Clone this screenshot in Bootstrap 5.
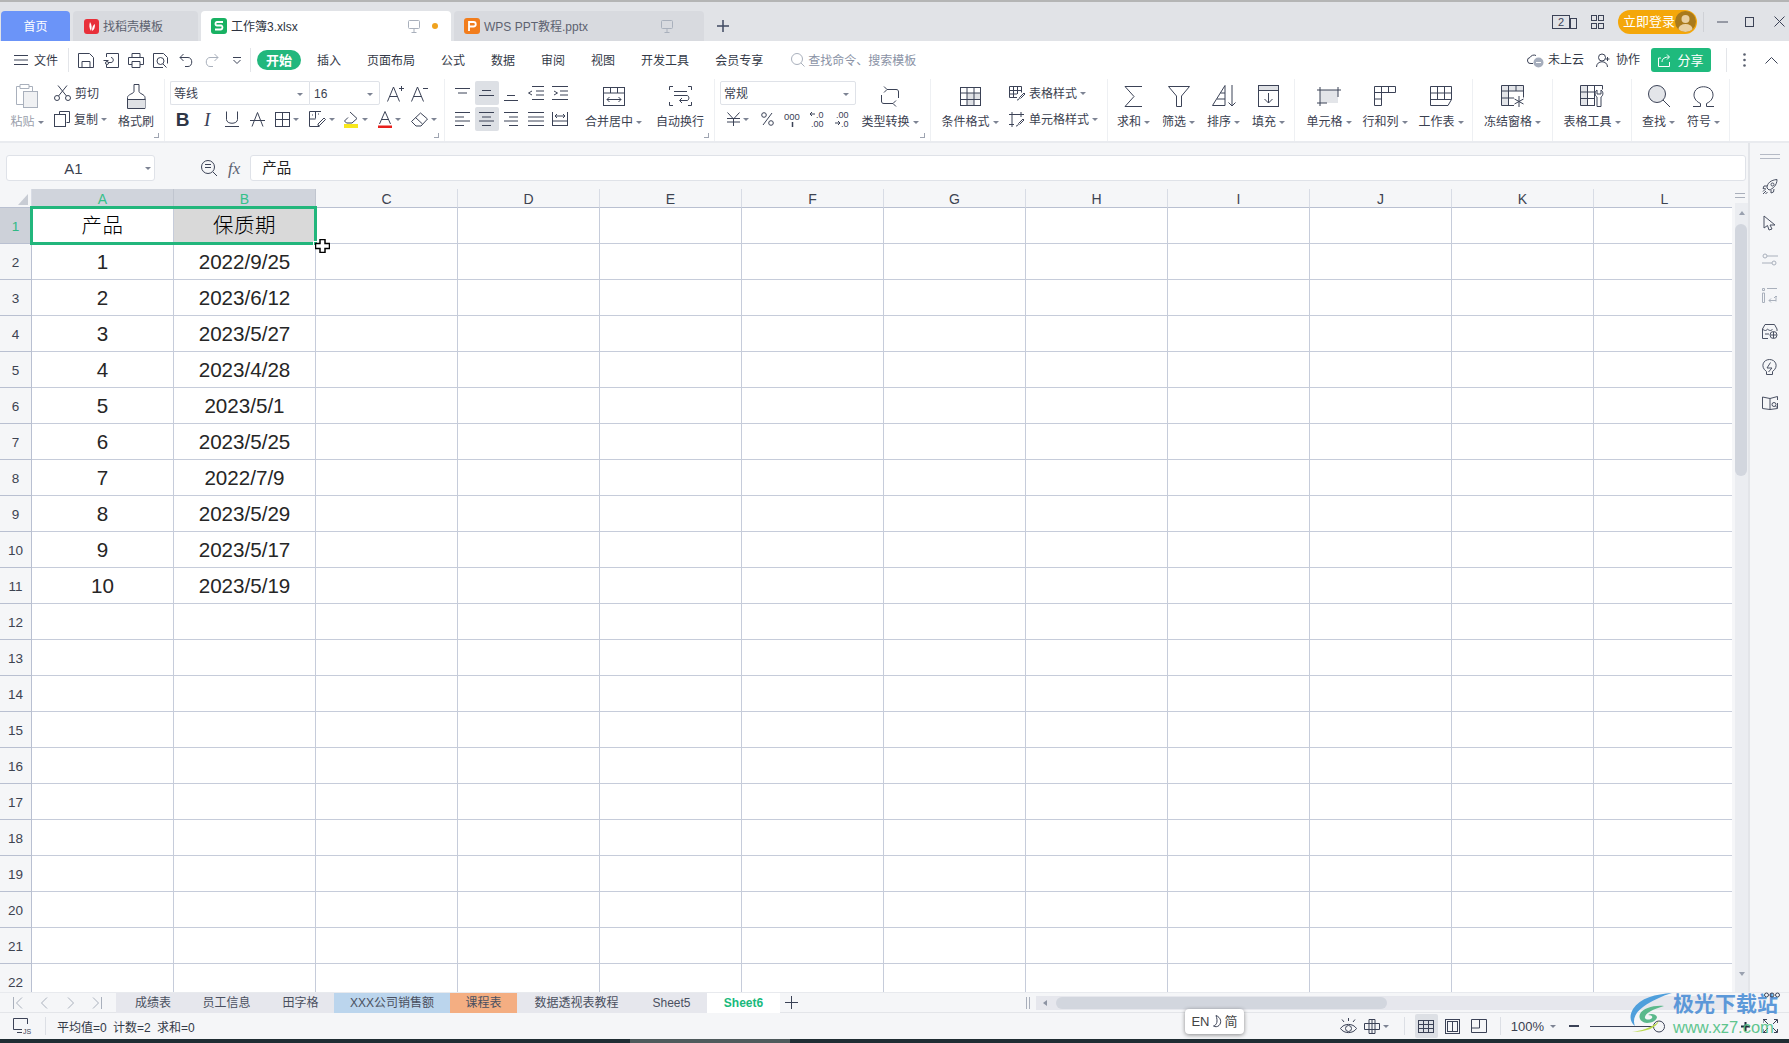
<!DOCTYPE html>
<html lang="zh-CN">
<head>
<meta charset="UTF-8" />
<title>工作簿3.xlsx - WPS</title>
<link href="https://cdn.jsdelivr.net/npm/bootstrap@5.3.3/dist/css/bootstrap.min.css" rel="stylesheet"/>
<style>
  html, body { height: 100%; overflow: hidden; }
  body { font-family: "Liberation Sans", "Noto Sans CJK SC", sans-serif; font-size: 12px; line-height: 1; color: #3b4150; background: #fff; }
  svg { display: block; flex: none; }
  .app { width: 1789px; height: 1043px; overflow: hidden; }
  .ico { fill: none; stroke: #3b4256; stroke-width: 1; }
  .ico text { stroke: none; fill: #3b4256; }
  .ico-lite { fill: none; stroke: #a9b0bc; stroke-width: 1; }
  .ico-side { fill: none; stroke: #4a5163; stroke-width: 1; }

  /* title bar */
  .titlebar { height: 41px; background: #e1e3e7; border-top: 2px solid #b4b5b5; padding-left: 1px; }
  .wtab { height: 30px; border-radius: 4px 4px 0 0; background: #d8dadf; margin-right: 3px; color: #5d6270; }
  .wtab-home { width: 69px; background: #6b94f8; color: #fff; padding-top: 2px; }
  .wtab-docer { width: 125px; padding-left: 11px; }
  .wtab-xls { width: 250px; padding-left: 10px; background: #fff; color: #2d3340; }
  .wtab-ppt { width: 250px; padding-left: 10px; }
  .wtab-name { margin-left: 4px; padding-top: 2px; }
  .wtab-tail { margin-left: auto; }
  .wtab-mon { margin-right: 31px; }
  .wdot { width: 6px; height: 6px; background: #f0a21e; border-radius: 50%; margin: 0 13px 0 12px; }
  .tab-add { margin: 0 0 9px 10px; }
  .tb-right { padding-right: 4px; }
  .login-pill { width: 79px; height: 24px; background: #f4a70a; color: #fff; font-size: 13px; padding-left: 5px; margin-left: 14px; }
  .login-av { width: 21px; height: 21px; margin-left: auto; margin-right: 1px; border-radius: 50%; background: #a97a1c; overflow: hidden; }
  .tb-sep { width: 1px; height: 20px; background: #cfd1d6; margin: 0 13px 0 6px; }
  .gl14 { margin-left: 14px; }
  .gl17 { margin-left: 17px; }
  .gl20 { margin-left: 20px; }

  /* menu row */
  .menubar { height: 38px; padding-left: 14px; background: #fff; color: #333947; }
  .mb-sep { width: 1px; height: 24px; background: #e3e5e9; }
  .mb-sep1 { margin: 0 9px 0 10px; }
  .mb-sep2 { margin: 0 6px 0 9px; }
  .mfile { margin-left: 6px; padding-top: 1px; }
  .qk { margin-right: 9px; }
  .qk2 { margin-right: 11px; }
  .qk3 { margin-right: 12px; }
  .qk4 { margin-right: 14px; }
  .mitem { margin-left: 26px; padding-top: 1px; }
  .start-pill { width: 44px; height: 20px; margin-right: -10px; background: #22b77d; color: #fff; font-size: 13px; font-weight: 700; padding-top: 1px; }
  .msearch { margin-left: 28px; }
  .search-txt { color: #8a92a5; margin-left: 3px; padding-top: 1px; }
  .share-btn { width: 60px; height: 24px; background: #1fba7d; color: #fff; border-radius: 3px; font-size: 13px; gap: 5px; margin-left: 11px; }
  .mb-right { padding-right: 11px; }
  .ml5 { margin-left: 5px; } .ml12 { margin-left: 12px; } .ml15 { margin-left: 15px; } .ml16 { margin-left: 16px; } .ml19 { margin-left: 19px; }

  /* ribbon */
  .ribbon { height: 64px; background: #fff; border-bottom: 2px solid #e9ebef; color: #3b4150; }
  .rgrp { height: 62px; border-right: 1px solid #eef0f3; flex: none; position: relative; }
  .g1 { width: 165px; } .g2 { width: 280px; padding-left: 5px; } .g3 { width: 270px; padding-left: 5px; }
  .g4 { width: 216px; padding-left: 5px; } .g5 { width: 177px; padding-left: 9px; } .g6 { width: 187px; padding-left: 3px; }
  .g7 { width: 178px; padding-left: 6px; } .g8 { width: 80px; } .g9 { width: 79px; } .g10 { width: 98px; padding-left: 4px; }
  .big { height: 62px; flex: none; }
  .big-ic { height: 34px; }
  .big-lb { height: 16px; padding-top: 2px; white-space: nowrap; }
  .w44 { width: 44px; } .w45 { width: 45px; } .w54 { width: 54px; } .w56 { width: 56px; } .w60 { width: 60px; } .w77 { width: 77px; } .w80 { width: 80px; }
  .dim { color: #9aa0ac; }
  .crt { width: 0; height: 0; border-left: 3px solid transparent; border-right: 3px solid transparent; border-top: 3px solid #7d8393; margin-left: 3px; flex: none; }
  .corner-mark { position: absolute; bottom: 3px; right: 5px; width: 5px; height: 5px; border-right: 1px solid #9ea4b1; border-bottom: 1px solid #9ea4b1; }
  .stack { padding-top: 2px; flex: none; }
  .srow { height: 24px; margin-bottom: 2px; }
  .scol { width: 60px; flex: none; padding-top: 2px; }
  .scol-wide { width: 100px; margin-left: 9px; }
  .stxt { margin-left: 4px; white-space: nowrap; padding-top: 2px; }
  .selbox { height: 24px; border: 1px solid #dfe2e8; border-radius: 2px; padding: 2px 3px 0; flex: none; }
  .sel-font { width: 139px; border-right: 0; border-radius: 2px 0 0 2px; }
  .sel-size { width: 71px; border-radius: 0 2px 2px 0; padding-left: 4px; }
  .sel-num { width: 136px; }
  .sel-crt { margin-left: auto; margin-right: 3px; }
  .cell { height: 24px; flex: none; border-radius: 2px; }
  .c24 { width: 24.5px; } .c25 { width: 25px; } .c34 { width: 34px; } .c35 { width: 35px; }
  .ml7 { margin-left: 7px; }
  .cell-on { background: #dde0e5; }
  .align-stack { width: 125px; }
  .num-stack { width: 140px; }
  .font-stack { width: 270px; }
  .txt-b { font-size: 19px; font-weight: 700; color: #2f3646; }
  .txt-i { font-family: "Liberation Serif", serif; font-size: 19px; font-style: italic; color: #3b4256; }
  .al-low { margin-top: 4px; }

  /* formula row */
  .workarea { width: 1748px; flex: none; }
  .formula { height: 46px; background: #f5f6f8; padding: 12px 2px 8px 6px; }
  .namebox { width: 149px; height: 26px; background: #fff; border: 1px solid #dfe2e8; border-radius: 3px; font-size: 15px; padding-right: 14px; position: relative; flex: none; }
  .namebox .crt { position: absolute; right: 3px; top: 11px; }
  .fx-ic { margin-left: 46px; }
  .fx-t { margin-left: 11px; margin-right: 10px; font-family: "Liberation Serif", serif; font-style: italic; font-size: 17px; color: #5c6272; }
  .fx-input { flex: 1; height: 26px; background: #fff; border: 1px solid #dfe2e8; border-radius: 3px; padding-left: 11px; font-size: 14.5px; color: #222; }

  /* sheet */
  .sheetrow { height: 803px; }
  .gridwrap { width: 1732px; overflow: hidden; position: relative; flex: none; }
  .gsheet { border-collapse: separate; border-spacing: 0; table-layout: fixed; width: 1736px; }
  .gsheet th, .gsheet td { padding: 2px 0 0; text-align: center; vertical-align: middle; font-weight: 400; }
  .gsheet .hc { height: 19px; background: #f5f6f8; border-right: 1px solid #d8dce5; border-bottom: 1px solid #b9c0d1; font-size: 14px; color: #3d4351; }
  .gsheet .hr { width: 32px; height: 36px; background: #f5f6f8; border-right: 1px solid #b9c0d1; border-bottom: 1px solid #b9c0d1; font-size: 13.5px; color: #3d4351; }
  .gsheet td { height: 36px; border-right: 1px solid #c6ccda; border-bottom: 1px solid #c6ccda; font-size: 20.6px; color: #262626; }
  .gsheet .col-on { background: #d0d4dc; color: #35c08a; border-right-color: #c0c5cf; }
  .gsheet .row-on { background: #cdd1d9; color: #2fb985; }
  .gsheet td.cjk { font-size: 20.5px; letter-spacing: .5px; font-weight: 300; color: #000; }
  .gsheet td.filled { background: #d9d9d9; }
  .corner-tri { margin: 0 0 0 18px; }
  .sel-box { position: absolute; left: 30px; top: 17px; width: 287px; height: 39px; border: 3px solid #22b67c; pointer-events: none; }
  .sel-handle { position: absolute; left: 313px; top: 52px; width: 5px; height: 5px; background: #22b67c; border: 1px solid #fff; }
  .cursor-ic { position: absolute; left: 315px; top: 50px; }
  .vscroll { width: 16px; flex: none; background: #f5f6f8; padding-left: 3px; }
  .vs-head { width: 10px; border-bottom: 1px solid #a9afbb; border-top: 1px solid #a9afbb; margin: 4px 0 0 0; height: 5px; }
  .vs-track { flex: 1; width: 13px; margin-top: 5px; background: #ebedf1; }
  .vs-up { height: 21px; }
  .vs-thumb { width: 12px; height: 252px; background: #d2d6de; border-radius: 6px; }
  .vs-down { margin-top: auto; height: 20px; }
  .arr-up { width: 0; height: 0; border-left: 3px solid transparent; border-right: 3px solid transparent; border-bottom: 4px solid #9aa1af; }
  .arr-dn { width: 0; height: 0; border-left: 3px solid transparent; border-right: 3px solid transparent; border-top: 4px solid #9aa1af; }
  .sidepanel { flex: 1; background: #f5f6f8; border-left: 2px solid #e3e5e9; height: 849px; }
  .sp-handle { height: 26px; }
  .sp-handle i { display: block; width: 20px; height: 5px; border-top: 1px solid #b5bac5; border-bottom: 1px solid #b5bac5; }
  .sp-item { height: 36px; }

  /* sheet tabs */
  .sheettabs { height: 21px; background: #f5f6f8; border-top: 1px solid #e8eaee; border-bottom: 1px solid #e3e5e9; }
  .st-nav { width: 116px; flex: none; gap: 0; padding-left: 13px; }
  .st-nav svg { margin-right: 17px; }
  .stab { height: 20px; background: #e6e7ed; flex: none; color: #4a5060; white-space: nowrap; padding-top: 1px; }
  .s1 { width: 70px; padding-left: 4px; } .s2 { width: 81px; } .s3 { width: 67px; } .s4 { width: 116px; background: #bbd5ed; }
  .s5 { width: 67px; background: #f4ae82; } .s6 { width: 119px; } .s7 { width: 71px; }
  .s8 { width: 73px; background: #fff; color: #18b97c; font-weight: 700; }
  .st-add { margin: 0 228px 0 5px; }
  .hsplit { width: 4px; height: 12px; border-left: 1px solid #a9afbb; border-right: 1px solid #a9afbb; margin-right: 6px; }
  .hs-track { width: 697px; height: 14px; background: #e6e7ed; padding-left: 7px; }
  .arr-lf { width: 0; height: 0; border-top: 3px solid transparent; border-bottom: 3px solid transparent; border-right: 4px solid #8d94a3; }
  .hs-thumb { width: 331px; height: 12px; border-radius: 6px; background: #d2d6de; margin-left: 9px; }

  /* status bar */
  .statusbar { height: 26px; background: #f5f6f8; padding-left: 13px; }
  .stb-sep { width: 1px; height: 18px; background: #dcdfe5; }
  .stb-sep1 { margin-left: 13px; }
  .stb-sum { margin-left: 11px; padding-top: 3px; color: #333947; word-spacing: 3px; white-space: nowrap; }
  .stb-right { padding-right: 11px; }
  .stb-sep2 { margin: 0 10px 0 15px; }
  .stb-sep3 { margin: 0 10px 0 13px; }
  .stb-zoom { font-size: 13px; padding-top: 1px; }
  .view-on { width: 23px; height: 24px; background: #dde0e5; border-radius: 2px; }
  .ml6 { margin-left: 6px; } .ml7b { margin-left: 7px; } .ml10 { margin-left: 10px; } .ml11 { margin-left: 11px; } .ml13 { margin-left: 13px; } .ml75 { margin-left: 75px; }
  .taskstrip { height: 4px; background: #1f2d33; }
  .taskstrip i { display: block; width: 160px; height: 4px; margin-left: 630px; background: #4f5a5c; }

  /* things that float over the sheet */
  .ime-pop { position: absolute; left: 1185px; top: 1009px; width: 59px; height: 25px; background: #fff; border-radius: 4px; box-shadow: 0 1px 4px rgba(0,0,0,.45); color: #444; font-size: 13px; gap: 3px; }
  .wm-logo { position: absolute; left: 1630px; top: 993px; }
  .wm-name { position: absolute; left: 1673px; top: 993px; color: #4d8fd6; font-size: 21px; font-weight: 700; white-space: nowrap; opacity: .9; }
  .wm-url { position: absolute; left: 1673px; top: 1019px; color: #4fc083; font-size: 16.5px; white-space: nowrap; opacity: .9; }
  .wm-dots { position: absolute; left: 1764px; top: 992px; }
</style>
</head>
<body>
<div class="app position-relative">

  <!-- title bar -->
  <div class="titlebar d-flex align-items-end">
    <div class="wtab wtab-home d-flex align-items-center justify-content-center">首页</div>
    <div class="wtab wtab-docer d-flex align-items-center">
      <svg width="15" height="15" viewBox="0 0 15 15"><rect width="15" height="15" rx="3" fill="#e8303a"/><path d="M6 3c-1 3-1 6 1 9 1-3 1-6-1-9zM11 5c-2 1-3 3-3 7 2-1 3-3 3-7z" fill="#fff"/></svg>
      <span class="wtab-name">找稻壳模板</span>
    </div>
    <div class="wtab wtab-xls d-flex align-items-center">
      <svg width="16" height="16" viewBox="0 0 16 16"><rect width="16" height="16" rx="3" fill="#18b162"/><path d="M12 4H6C4 4 4 7.500 6 7.500h4c2 0 2 4-.5 4H4" fill="none" stroke="#fff" stroke-width="1.800"/></svg>
      <span class="wtab-name">工作簿3.xlsx</span>
      <svg class="ico-lite wtab-tail" width="12" height="13" viewBox="0 0 12 13"><rect x=".5" y=".5" width="11" height="8" rx="1"/><path d="M6 9v3M3.500 12.500h5"/></svg>
      <span class="wdot"></span>
    </div>
    <div class="wtab wtab-ppt d-flex align-items-center">
      <svg width="16" height="16" viewBox="0 0 16 16"><rect width="16" height="16" rx="3" fill="#f27d1c"/><path d="M5 13V4h4.500c3 0 3 4.500 0 4.500H5" fill="none" stroke="#fff" stroke-width="1.800"/></svg>
      <span class="wtab-name">WPS PPT教程.pptx</span>
      <svg class="ico-lite wtab-tail wtab-mon" width="12" height="13" viewBox="0 0 12 13"><rect x=".5" y=".5" width="11" height="8" rx="1"/><path d="M6 9v3M3.500 12.500h5"/></svg>
    </div>
    <svg class="tab-add" width="12" height="12" viewBox="0 0 12 12"><path d="M6 0v12M0 6h12" stroke="#3f4a62" stroke-width="1.500"/></svg>

    <div class="tb-right ms-auto align-self-stretch d-flex align-items-center">
      <svg class="ico" width="25" height="14" viewBox="0 0 25 14"><rect x=".5" y=".5" width="17" height="13"/><rect x="18.500" y="3.500" width="6" height="10"/><text x="6" y="11" font-size="11">2</text></svg>
      <svg class="ico gl14" width="13" height="14" viewBox="0 0 13 14"><rect x=".5" y=".5" width="5" height="5"/><rect x="7.500" y=".5" width="5" height="5"/><rect x=".5" y="8.500" width="5" height="5"/><rect x="7.500" y="8.500" width="5" height="5"/></svg>
      <div class="login-pill rounded-pill d-flex align-items-center">立即登录
        <span class="login-av d-block"><svg width="21" height="21" viewBox="0 0 21 21"><circle cx="10.500" cy="8" r="4" fill="#e9cfa0"/><ellipse cx="10.500" cy="18" rx="7" ry="5" fill="#e9cfa0"/></svg></span>
      </div>
      <span class="tb-sep"></span>
      <svg width="11" height="2" viewBox="0 0 11 2"><path d="M0 1h11" stroke="#4a5163"/></svg>
      <svg class="ico gl17" width="9" height="10" viewBox="0 0 9 10"><rect x=".5" y=".5" width="8" height="9"/></svg>
      <svg class="ico gl20" width="11" height="11" viewBox="0 0 11 11"><path d="M.5.5l10 10M10.500.5l-10 10"/></svg>
    </div>
  </div>

  <!-- menu row -->
  <div class="menubar d-flex align-items-center">
    <svg class="ico" width="14" height="10" viewBox="0 0 14 10"><path d="M0 .5h14M0 5h14M0 9.500h14"/></svg>
    <span class="mfile">文件</span>
    <span class="mb-sep mb-sep1"></span>
    <svg class="ico qk" width="16" height="15" viewBox="0 0 16 15"><path d="M.5.500h11l4 4v10H.5zM4 14.500V8.500h8v6"/></svg>
    <svg class="ico qk" width="16" height="15" viewBox="0 0 16 15"><path d="M3.500 4V.5h12v14h-12v-3M.5 7.500h5M8 4.500c3 0 3 5 0 5H5.500"/><circle cx="4" cy="10" r="1.500"/></svg>
    <svg class="ico qk" width="16" height="15" viewBox="0 0 16 15"><path d="M4 4.500V.5h8v4M4 11.500H.5v-7h15v7H12M4 8.500h8v6H4z"/></svg>
    <svg class="ico qk2" width="15" height="15" viewBox="0 0 15 15"><path d="M10 14.500H.5V.5h10l4 4v6"/><circle cx="7.500" cy="8" r="3.500"/><path d="M10 11l3.500 3.500"/></svg>
    <svg class="ico qk3" width="14" height="14" viewBox="0 0 14 14"><path d="M4.500 1L1 4.500 4.500 8M1 4.500h8c5 0 5 9 0 9H6"/></svg>
    <svg class="ico-lite qk4" width="14" height="14" viewBox="0 0 14 14"><path d="M9.500 1L13 4.500 9.500 8M13 4.500H5c-5 0-5 9 0 9h3"/></svg>
    <svg class="ico" width="8" height="7" viewBox="0 0 8 7"><path d="M0 .5h8M.5 3l3.500 3.500L7.500 3"/></svg>
    <span class="mb-sep mb-sep2"></span>
    <span class="start-pill rounded-pill d-flex align-items-center justify-content-center">开始</span>
    <span class="mitem">插入</span><span class="mitem">页面布局</span><span class="mitem">公式</span><span class="mitem">数据</span><span class="mitem">审阅</span><span class="mitem">视图</span><span class="mitem">开发工具</span><span class="mitem">会员专享</span>
    <svg class="ico-lite msearch" width="14" height="14" viewBox="0 0 14 14"><circle cx="6" cy="6" r="5.500"/><path d="M10 10l3.500 3.500"/></svg>
    <span class="search-txt">查找命令、搜索模板</span>

    <div class="mb-right ms-auto d-flex align-items-center">
      <svg width="17" height="16" viewBox="0 0 17 16"><path d="M9 3.500A4.500 4.500 0 0 0 3 5.500a3 3 0 0 0 1 6h2" fill="none" stroke="#3b4256"/><circle cx="11.500" cy="10.500" r="5" fill="#a5adbc"/><path d="M9 10.500h5" stroke="#fff"/></svg>
      <span class="ms-1">未上云</span>
      <svg class="ico ml12" width="15" height="15" viewBox="0 0 15 15"><circle cx="6" cy="4.500" r="3.500"/><path d="M.5 14c0-7 11-7 11 0M11.500 4v4M9.500 6h4"/></svg>
      <span class="ml5">协作</span>
      <div class="share-btn d-flex align-items-center justify-content-center">
        <svg width="14" height="13" viewBox="0 0 14 13"><path d="M3 4H.5v8.500h11V8M4 8c0-3.500 3-5 7-5M9 .5L11.500 3 9 5.500" fill="none" stroke="#fff"/></svg>
        分享
      </div>
      <span class="mb-sep ml15"></span>
      <svg class="ml16" width="3" height="14" viewBox="0 0 3 14"><circle cx="1.500" cy="1.500" r="1.300" fill="#5a6070"/><circle cx="1.500" cy="7" r="1.300" fill="#5a6070"/><circle cx="1.500" cy="12.500" r="1.300" fill="#5a6070"/></svg>
      <svg class="ico ml19" width="13" height="7" viewBox="0 0 13 7"><path d="M.5 6.500l6-6 6 6"/></svg>
    </div>
  </div>

  <!-- ribbon -->
  <div class="ribbon d-flex">
    <div class="rgrp g1 d-flex">
      <div class="big w54 d-flex flex-column align-items-center">
        <div class="big-ic d-flex align-items-center"><svg class="ico-lite" width="22" height="24" viewBox="0 0 22 24"><path d="M4 2.500H.5v18H7M13 2.500h3.500V7M4 .5h9v4H4z"/><rect x="7.500" y="7.500" width="14" height="16" fill="#f0f1f3"/></svg></div>
        <div class="big-lb d-flex align-items-center dim">粘贴<i class="crt"></i></div>
      </div>
      <div class="scol">
        <div class="srow d-flex align-items-center">
          <svg class="ico" width="17" height="16" viewBox="0 0 17 16"><circle cx="3" cy="13" r="2.500"/><circle cx="14" cy="13" r="2.500"/><path d="M4.500 11L13 .5M12.500 11L4 .5"/></svg>
          <span class="stxt">剪切</span>
        </div>
        <div class="srow d-flex align-items-center">
          <svg class="ico" width="16" height="16" viewBox="0 0 16 16"><path d="M5.500 3.500V.5h10v11h-3"/><rect x=".5" y="3.500" width="11" height="12"/></svg>
          <span class="stxt">复制</span><i class="crt"></i>
        </div>
      </div>
      <div class="big w44 d-flex flex-column align-items-center">
        <div class="big-ic d-flex align-items-center"><svg class="ico" width="19" height="25" viewBox="0 0 19 25"><path d="M7 .5h5v7c0 2 6 3 6 6v11H.5v-11c0-3 6.500-4 6.500-6z"/><rect x="1" y="16" width="17" height="8" fill="#dfe1e5" stroke="none"/><path d="M.5 15.500h18"/></svg></div>
        <div class="big-lb d-flex align-items-center">格式刷</div>
      </div>
      <span class="corner-mark"></span>
    </div>

    <div class="rgrp g2 d-flex">
      <div class="stack font-stack">
        <div class="srow d-flex align-items-center">
          <div class="selbox sel-font d-flex align-items-center">等线<i class="crt sel-crt"></i></div>
          <div class="selbox sel-size d-flex align-items-center">16<i class="crt sel-crt"></i></div>
          <svg class="ico ml7" width="17" height="17" viewBox="0 0 17 17"><path d="M.5 16.500L6.500 2l6 14.500M2.500 11.500h8M12 3.500h5M14.500 1v5"/></svg>
          <svg class="ico ml7" width="17" height="17" viewBox="0 0 17 17"><path d="M.5 16.500L6.500 2l6 14.500M2.500 11.500h8M12 3.500h5"/></svg>
        </div>
        <div class="srow d-flex align-items-center">
          <div class="cell c25 d-flex align-items-center justify-content-center txt-b">B</div>
          <div class="cell c24 d-flex align-items-center justify-content-center txt-i">I</div>
          <div class="cell c25 d-flex align-items-center justify-content-center"><svg class="ico" width="14" height="16" viewBox="0 0 14 16"><path d="M1.500.5v8c0 5 11 5 11 0v-8M0 15.500h14"/></svg></div>
          <div class="cell c25 d-flex align-items-center justify-content-center"><svg class="ico" width="15" height="15" viewBox="0 0 15 15"><path d="M2 14.500L7.500.5l5.500 14M0 8.500h15"/></svg></div>
          <div class="cell c35 d-flex align-items-center justify-content-center"><svg class="ico" width="15" height="15" viewBox="0 0 15 15"><rect x=".5" y=".5" width="14" height="14"/><path d="M7.500 0v15M0 7.500h15"/></svg><i class="crt"></i></div>
          <div class="cell c34 d-flex align-items-center justify-content-center"><svg class="ico" width="17" height="16" viewBox="0 0 17 16"><path d="M12 .5H.5v15h10M.5 8h6M6.500.5v7M3 4h1M9 3h1"/><path d="M9 13l6-6 1.500 1.500-6 6H9z"/></svg><i class="crt"></i></div>
          <div class="cell c34 d-flex align-items-center justify-content-center"><svg width="16" height="17" viewBox="0 0 16 17"><path d="M7 1l7 6.500-5 4.500H3.500L1.500 10 5 6.500" fill="none" stroke="#3b4256"/><rect x="1" y="13" width="14" height="4" fill="#f8e71c"/></svg><i class="crt"></i></div>
          <div class="cell c34 d-flex align-items-center justify-content-center"><svg width="14" height="17" viewBox="0 0 14 17"><path d="M1.500 13L7 .5 12.500 13M3.500 8.500h7" fill="none" stroke="#3b4256"/><rect y="14.500" width="14" height="2.500" fill="#e8201c"/></svg><i class="crt"></i></div>
          <div class="cell c34 d-flex align-items-center justify-content-center"><svg class="ico" width="17" height="15" viewBox="0 0 17 15"><path d="M9.500 1l7 6-6.500 7H5L.5 9.500z"/><path d="M4.500 5.500l7 6.500"/></svg><i class="crt"></i></div>
        </div>
      </div>
      <span class="corner-mark"></span>
    </div>

    <div class="rgrp g3 d-flex">
      <div class="stack align-stack">
        <div class="srow d-flex">
          <div class="cell c24 d-flex align-items-center justify-content-center"><svg class="ico" width="15" height="10" viewBox="0 0 15 10"><path d="M0 .5h15M3 5h9"/></svg></div>
          <div class="cell c24 cell-on d-flex align-items-center justify-content-center"><svg class="ico" width="15" height="8" viewBox="0 0 15 8"><path d="M3 1.500h9M0 6.500h15"/></svg></div>
          <div class="cell c24 d-flex align-items-center justify-content-center"><svg class="ico al-low" width="14" height="12" viewBox="0 0 14 12"><path d="M3 6.500h8M0 11.500h14"/></svg></div>
          <div class="cell c24 d-flex align-items-center justify-content-center"><svg class="ico" width="16" height="14" viewBox="0 0 16 14"><path d="M4 .5h12M8 5h8M8 9h8M4 13.500h12M4 5L.5 7 4 9"/></svg></div>
          <div class="cell c24 d-flex align-items-center justify-content-center"><svg class="ico" width="16" height="14" viewBox="0 0 16 14"><path d="M0 .5h16M8 5h8M8 9h8M0 13.500h16M2 5l3.500 2L2 9"/></svg></div>
        </div>
        <div class="srow d-flex">
          <div class="cell c24 d-flex align-items-center justify-content-center"><svg class="ico" width="15" height="14" viewBox="0 0 15 14"><path d="M0 .5h15M0 5h9M0 9h15M0 13.500h9"/></svg></div>
          <div class="cell c24 cell-on d-flex align-items-center justify-content-center"><svg class="ico" width="15" height="14" viewBox="0 0 15 14"><path d="M0 .5h15M3 5h9M0 9h15M3 13.500h9"/></svg></div>
          <div class="cell c24 d-flex align-items-center justify-content-center"><svg class="ico" width="14" height="14" viewBox="0 0 14 14"><path d="M0 .5h14M5 5h9M0 9h14M5 13.500h9"/></svg></div>
          <div class="cell c24 d-flex align-items-center justify-content-center"><svg class="ico" width="16" height="14" viewBox="0 0 16 14"><path d="M0 .5h16M0 5h16M0 9h16M0 13.500h16"/></svg></div>
          <div class="cell c24 d-flex align-items-center justify-content-center"><svg class="ico" width="16" height="14" viewBox="0 0 16 14"><path d="M.5 0v14M15.500 0v14M0 9h16M0 13.500h16M3 4h10M5 2L3 4l2 2M11 2l2 2-2 2"/></svg></div>
        </div>
      </div>
      <div class="big w77 d-flex flex-column align-items-center">
        <div class="big-ic d-flex align-items-center"><svg class="ico" width="22" height="19" viewBox="0 0 22 19"><rect x=".5" y=".5" width="21" height="18"/><path d="M0 6h22M7.500 0v6M14.500 0v6M4 12.500h14M6.500 10L4 12.500 6.500 15M15.500 10l2.500 2.500-2.500 2.500"/></svg></div>
        <div class="big-lb d-flex align-items-center">合并居中<i class="crt"></i></div>
      </div>
      <div class="big w56 d-flex flex-column align-items-center">
        <div class="big-ic d-flex align-items-center"><svg class="ico" width="23" height="20" viewBox="0 0 23 20"><path d="M4 .5H.5V4M19 .5h3.500V4M.5 16v3.500H4M22.500 16v3.500H19M5 5.500h13M5 9.500h13c2.500 0 2.500 5 0 5h-7M13 12l-2.500 2.500L13 17"/></svg></div>
        <div class="big-lb d-flex align-items-center">自动换行</div>
      </div>
      <span class="corner-mark"></span>
    </div>

    <div class="rgrp g4 d-flex">
      <div class="stack num-stack">
        <div class="srow d-flex align-items-center">
          <div class="selbox sel-num d-flex align-items-center">常规<i class="crt sel-crt"></i></div>
        </div>
        <div class="srow d-flex align-items-center">
          <div class="cell c35 d-flex align-items-center justify-content-center"><svg class="ico" width="13" height="14" viewBox="0 0 13 14"><path d="M.5.5L6.500 7l6-6.500M6.500 7v7M0 6.500h13M0 10h13"/></svg><i class="crt"></i></div>
          <div class="cell c25 d-flex align-items-center justify-content-center"><svg class="ico" width="13" height="14" viewBox="0 0 13 14"><circle cx="3" cy="3" r="2.300"/><circle cx="10" cy="11" r="2.300"/><path d="M11 1L2 13"/></svg></div>
          <div class="cell c25 d-flex align-items-center justify-content-center"><svg class="ico" width="17" height="17" viewBox="0 0 17 17"><text x="0" y="9" font-size="9.500">000</text><path d="M8.500 11v5" stroke-width="1.500"/></svg></div>
          <div class="cell c25 d-flex align-items-center justify-content-center"><svg class="ico" width="16" height="20" viewBox="0 0 16 20"><path d="M0 5h5M2 3L0 5l2 2"/><text x="6" y="9" font-size="9">.0</text><text x="1" y="18" font-size="9">.00</text></svg></div>
          <div class="cell c25 d-flex align-items-center justify-content-center"><svg class="ico" width="16" height="20" viewBox="0 0 16 20"><text x="1" y="9" font-size="9">.00</text><path d="M0 14h5M3 12l2 2-2 2"/><text x="6" y="18" font-size="9">.0</text></svg></div>
        </div>
      </div>
      <div class="big w60 d-flex flex-column align-items-center">
        <div class="big-ic d-flex align-items-center"><svg class="ico" width="18" height="21" viewBox="0 0 18 21"><path d="M3 .5L6 3.500H15c2 0 2.500 1 2.500 2.500V12M6 3.500L3 6.500M15 20.500L12 17.500H3c-2 0-2.500-1-2.500-2.500V9M12 17.500l3-3"/></svg></div>
        <div class="big-lb d-flex align-items-center">类型转换<i class="crt"></i></div>
      </div>
      <span class="corner-mark"></span>
    </div>

    <div class="rgrp g5 d-flex">
      <div class="big w60 d-flex flex-column align-items-center">
        <div class="big-ic d-flex align-items-center"><svg width="21" height="19" viewBox="0 0 21 19"><rect x="7" y="6" width="7" height="12" fill="#dfe1e5"/><rect x="14" y="6" width="6" height="6" fill="#dfe1e5"/><rect x=".5" y=".5" width="20" height="18" fill="none" stroke="#3b4256"/><path d="M0 6h21M0 12.500h21M7 0v19M14 0v19" fill="none" stroke="#3b4256"/></svg></div>
        <div class="big-lb d-flex align-items-center">条件格式<i class="crt"></i></div>
      </div>
      <div class="scol scol-wide">
        <div class="srow d-flex align-items-center">
          <svg class="ico" width="16" height="15" viewBox="0 0 16 15"><path d="M8 11.500H.5V.5h12v6M0 4.500h13M0 8h8M4.500 0v12M8.500 0v8"/><path d="M8 14c2 0 2-1 2.500-2.500L15 7l1 1-4.500 4.500"/></svg>
          <span class="stxt">表格样式</span><i class="crt"></i>
        </div>
        <div class="srow d-flex align-items-center">
          <svg class="ico" width="16" height="15" viewBox="0 0 16 15"><path d="M3 0v15M12 0v5M0 2.500h15M0 12.500h5"/><path d="M7 14c2 0 2-1 2.500-2.500L14 7l1 1-4.500 4.500"/></svg>
          <span class="stxt">单元格样式</span><i class="crt"></i>
        </div>
      </div>
    </div>

    <div class="rgrp g6 d-flex">
      <div class="big w45 d-flex flex-column align-items-center">
        <div class="big-ic d-flex align-items-center"><svg class="ico" width="19" height="21" viewBox="0 0 19 21"><path d="M18 .5H1l9 10-9 10h17"/></svg></div>
        <div class="big-lb d-flex align-items-center">求和<i class="crt"></i></div>
      </div>
      <div class="big w45 d-flex flex-column align-items-center">
        <div class="big-ic d-flex align-items-center"><svg class="ico" width="22" height="21" viewBox="0 0 22 21"><path d="M.5.5h21L13.500 10v10.500h-5V10z"/></svg></div>
        <div class="big-lb d-flex align-items-center">筛选<i class="crt"></i></div>
      </div>
      <div class="big w45 d-flex flex-column align-items-center">
        <div class="big-ic d-flex align-items-center"><svg class="ico" width="24" height="22" viewBox="0 0 24 22"><path d="M.5 20.500L13 .5v20zM5 14h8M8.500 8h4.500M20 0v21M16.500 17.500L20 21l3.500-3.500"/></svg></div>
        <div class="big-lb d-flex align-items-center">排序<i class="crt"></i></div>
      </div>
      <div class="big w45 d-flex flex-column align-items-center">
        <div class="big-ic d-flex align-items-center"><svg class="ico" width="21" height="22" viewBox="0 0 21 22"><rect x=".5" y=".5" width="20" height="21"/><rect x="1" y="1" width="19" height="4" fill="#dfe1e5" stroke="none"/><path d="M0 5.500h21M10.500 8v10M6.500 14l4 4 4-4"/></svg></div>
        <div class="big-lb d-flex align-items-center">填充<i class="crt"></i></div>
      </div>
    </div>

    <div class="rgrp g7 d-flex">
      <div class="big w56 d-flex flex-column align-items-center">
        <div class="big-ic d-flex align-items-center"><svg width="24" height="19" viewBox="0 0 24 19"><rect x="3" y="3" width="18" height="13" fill="#e3e5e9"/><path d="M3 0v19M21 0v10M0 3h24M0 16h10" fill="none" stroke="#3b4256"/></svg></div>
        <div class="big-lb d-flex align-items-center">单元格<i class="crt"></i></div>
      </div>
      <div class="big w56 d-flex flex-column align-items-center">
        <div class="big-ic d-flex align-items-center"><svg class="ico" width="22" height="20" viewBox="0 0 22 20"><path d="M.5 19.500V.5h21v6H7.500v13zM.5 6.500h7M.5 13h7M7.500 0v7M14.500 0v7"/></svg></div>
        <div class="big-lb d-flex align-items-center">行和列<i class="crt"></i></div>
      </div>
      <div class="big w56 d-flex flex-column align-items-center">
        <div class="big-ic d-flex align-items-center"><svg class="ico" width="22" height="20" viewBox="0 0 22 20"><path d="M18 19.500H.5V.5h21v13zM0 7h22M0 13.500h21.500M7.500 0v13.500M14.500 0v13.500"/></svg></div>
        <div class="big-lb d-flex align-items-center">工作表<i class="crt"></i></div>
      </div>
    </div>

    <div class="rgrp g8 d-flex justify-content-center">
      <div class="big w80 d-flex flex-column align-items-center">
        <div class="big-ic d-flex align-items-center"><svg width="24" height="22" viewBox="0 0 24 22"><path d="M1 1h22v5H8v14H1z" fill="#e3e5e9"/><path d="M13 20.500H.5V.5h22v12M0 6h23M0 13h13M7.500 0v21M15 0v6" fill="none" stroke="#3b4256"/><path d="M18 11v11M13.500 14l9 5M22.500 14l-9 5" stroke="#3b4256" fill="none"/></svg></div>
        <div class="big-lb d-flex align-items-center">冻结窗格<i class="crt"></i></div>
      </div>
    </div>

    <div class="rgrp g9 d-flex justify-content-center">
      <div class="big w80 d-flex flex-column align-items-center">
        <div class="big-ic d-flex align-items-center"><svg width="24" height="22" viewBox="0 0 24 22"><rect x="1" y="1" width="7" height="19" fill="#e3e5e9"/><path d="M14 20.500H.5V.5h22v4M0 7h14M0 13.500h14M7.500 0v21M14.500 0v21" fill="none" stroke="#3b4256"/><path d="M17 5c-3 2-2 6 0 7v9.500h4V12c2-1 3-5 0-7v4h-4z" fill="#fff" stroke="#3b4256"/></svg></div>
        <div class="big-lb d-flex align-items-center">表格工具<i class="crt"></i></div>
      </div>
    </div>

    <div class="rgrp g10 d-flex">
      <div class="big w45 d-flex flex-column align-items-center">
        <div class="big-ic d-flex align-items-center"><svg width="22" height="22" viewBox="0 0 22 22"><circle cx="9" cy="9" r="8.500" fill="#e3e5e9" stroke="#3b4256"/><path d="M15 15l7 7" stroke="#3b4256" fill="none"/></svg></div>
        <div class="big-lb d-flex align-items-center">查找<i class="crt"></i></div>
      </div>
      <div class="big w45 d-flex flex-column align-items-center">
        <div class="big-ic d-flex align-items-center"><svg class="ico" width="21" height="21" viewBox="0 0 21 21"><path d="M0 20.500h7.500v-3C2 15 1 11 1 9c0-11 19-11 19 0 0 2-1 6-6.500 8.500v3H21"/></svg></div>
        <div class="big-lb d-flex align-items-center">符号<i class="crt"></i></div>
      </div>
    </div>
  </div>

  <!-- work area -->
  <div class="d-flex">
    <div class="workarea">
      <div class="formula d-flex align-items-center">
        <div class="namebox d-flex align-items-center justify-content-center">A1<i class="crt"></i></div>
        <svg class="ico fx-ic" width="16" height="16" viewBox="0 0 16 16"><circle cx="7" cy="7" r="6.500"/><path d="M4 7.500h6M4 4.500h6M12 12l4 4"/></svg>
        <span class="fx-t">fx</span>
        <div class="fx-input d-flex align-items-center">产品</div>
      </div>
      <div class="sheetrow d-flex">
        <div class="gridwrap">
          <table class="gsheet" id="sheet"></table>
          <div class="sel-box"></div>
          <div class="sel-handle"></div>
          <svg class="cursor-ic" width="15" height="14" viewBox="0 0 15 14"><path d="M5 .5h5v4h4.500v5H10v4H5v-4H.5v-5H5z" fill="#fff" stroke="#000" stroke-width="1.500"/></svg>
        </div>
        <div class="vscroll d-flex flex-column">
          <div class="vs-head"></div>
          <div class="vs-track d-flex flex-column">
            <div class="vs-up d-flex justify-content-center pt-2"><i class="arr-up"></i></div>
            <div class="vs-thumb"></div>
            <div class="vs-down d-flex justify-content-center"><i class="arr-dn"></i></div>
          </div>
        </div>
      </div>
    </div>
    <div class="sidepanel d-flex flex-column align-items-center">
      <div class="sp-handle d-flex align-items-center"><i></i></div>
      <div class="sp-item d-flex align-items-center"><svg class="ico-side" width="16" height="16" viewBox="0 0 16 16"><path d="M5 9c0-5 4-8 10-8.500C15 6 11 10 7 11zM5 7H2L1 9.500l3 .5M9 11v3l2.500-1 .5-3M1 15l3-3M1 12.500l2-2M3.500 15l2-2"/><circle cx="10.500" cy="5.500" r="1.500"/></svg></div>
      <div class="sp-item d-flex align-items-center"><svg class="ico-side" width="13" height="16" viewBox="0 0 13 16"><path d="M1 1v12l3.500-2.500L6 15l3-1-2-4h5z"/></svg></div>
      <div class="sp-item d-flex align-items-center"><svg class="ico-lite" width="16" height="13" viewBox="0 0 16 13"><circle cx="3" cy="3" r="2"/><circle cx="12" cy="10" r="2"/><path d="M5 3h11M0 10h10"/></svg></div>
      <div class="sp-item d-flex align-items-center"><svg class="ico-lite" width="15" height="15" viewBox="0 0 15 15"><path d="M.5.5h2v2h-2zM5 .5h10M.5 5h2v9.500h-2zM14 13.500V8M12 10l2-2 2 2M14 12.500H7M9 10.500l-2 2 2 2"/></svg></div>
      <div class="sp-item d-flex align-items-center"><svg class="ico-side" width="16" height="15" viewBox="0 0 16 15"><path d="M6 14.500H.5V5L3 .5h9.500L15 5v2M.5 5c2 2 4 2 5 0 2 2 4 2 5 0M3 10h4"/><circle cx="11.500" cy="11" r="3.500"/><path d="M11.500 8v6M8.500 11h6"/></svg></div>
      <div class="sp-item d-flex align-items-center"><svg class="ico-side" width="15" height="16" viewBox="0 0 15 16"><path d="M4.500 12.500C-2 8 1 .5 7.500.5s9.500 7.500 3 12v3h-6zM8.500 3.500L5 9h5L6.500 13"/></svg></div>
      <div class="sp-item d-flex align-items-center"><svg class="ico-side" width="16" height="14" viewBox="0 0 16 14"><path d="M8 2.500L.5 1v11.500L8 13.500l7.500-1V7M8 2.500l7.500-2V4M8 2.500v11"/><circle cx="12" cy="8.500" r="2"/><path d="M13.500 10l2 2"/></svg></div>
    </div>
  </div>

  <!-- sheet tabs -->
  <div class="sheettabs d-flex align-items-center">
    <div class="st-nav d-flex align-items-center">
      <svg class="ico-lite" width="10" height="12" viewBox="0 0 10 12"><path d="M.5 0v12M9 .5L3.500 6 9 11.500"/></svg>
      <svg class="ico-lite" width="9" height="12" viewBox="0 0 9 12"><path d="M7 .5L1.500 6 7 11.500"/></svg>
      <svg class="ico-lite" width="9" height="12" viewBox="0 0 9 12"><path d="M2 .5L7.500 6 2 11.500"/></svg>
      <svg class="ico-lite" width="10" height="12" viewBox="0 0 10 12"><path d="M9.500 0v12M1 .5L6.500 6 1 11.500"/></svg>
    </div>
    <div class="stab s1 d-flex align-items-center justify-content-center">成绩表</div>
    <div class="stab s2 d-flex align-items-center justify-content-center">员工信息</div>
    <div class="stab s3 d-flex align-items-center justify-content-center">田字格</div>
    <div class="stab s4 d-flex align-items-center justify-content-center">XXX公司销售额</div>
    <div class="stab s5 d-flex align-items-center justify-content-center">课程表</div>
    <div class="stab s6 d-flex align-items-center justify-content-center">数据透视表教程</div>
    <div class="stab s7 d-flex align-items-center justify-content-center">Sheet5</div>
    <div class="stab s8 d-flex align-items-center justify-content-center">Sheet6</div>
    <svg class="st-add" width="13" height="13" viewBox="0 0 13 13"><path d="M6.500 0v13M0 6.500h13" stroke="#3b4256"/></svg>
    <i class="hsplit"></i>
    <div class="hs-track d-flex align-items-center"><i class="arr-lf"></i><div class="hs-thumb"></div></div>
  </div>

  <!-- status bar -->
  <div class="statusbar d-flex align-items-center">
    <svg class="ico" width="19" height="17" viewBox="0 0 19 17"><path d="M9 11.500H.5V.5h14V6M4 14.500h5"/><text x="10" y="15.500" font-size="7">JS</text></svg>
    <span class="stb-sep stb-sep1"></span>
    <span class="stb-sum">平均值=0 计数=2 求和=0</span>
    <div class="stb-right ms-auto d-flex align-items-center">
      <svg class="ico" width="17" height="17" viewBox="0 0 17 17"><path d="M.5 10.500C4 5 13 5 16.500 10.500 13 16 4 16 .5 10.500z"/><circle cx="8.500" cy="10.500" r="3"/><path d="M8.500 0v3M2 1.500L4 4M15 1.500L13 4"/></svg>
      <svg class="ico ml7b" width="16" height="15" viewBox="0 0 16 15"><path d="M5 .5h6v4h4.500v6H11v4H5v-4H.5v-6H5zM5 4.500v6M11 4.500v6M5 4.500h6M5 10.500h6M8 .5v14"/></svg>
      <i class="crt"></i>
      <span class="stb-sep stb-sep2"></span>
      <div class="view-on d-flex align-items-center justify-content-center"><svg class="ico" width="16" height="13" viewBox="0 0 16 13"><rect x=".5" y=".5" width="15" height="12"/><path d="M0 4.500h16M0 8.500h16M5.500 0v13M10.500 0v13"/></svg></div>
      <svg class="ico ml7b" width="15" height="15" viewBox="0 0 15 15"><rect x=".5" y=".5" width="14" height="14"/><rect x="2.500" y="2.500" width="10" height="10"/><path d="M7.500 2v11"/></svg>
      <svg class="ico ml11" width="16" height="14" viewBox="0 0 16 14"><path d="M.5.500h15v13H.5zM.5 9h8V.5"/></svg>
      <span class="stb-sep stb-sep3"></span>
      <span class="stb-zoom">100%</span><i class="crt ml6"></i>
      <svg class="ml13" width="10" height="2" viewBox="0 0 10 2"><path d="M0 1h10" stroke="#3b4256" stroke-width="2"/></svg>
      <svg class="ml11" width="76" height="13" viewBox="0 0 76 13"><path d="M0 6.500h64" stroke="#3b4256"/><circle cx="69" cy="6.500" r="5.500" fill="none" stroke="#3b4256"/></svg>
      <svg class="ml75" width="9" height="9" viewBox="0 0 9 9"><path d="M4.500 0v9M0 4.500h9" stroke="#1d2b3a" stroke-width="2"/></svg>
      <svg class="ico ml13" width="15" height="14" viewBox="0 0 15 14"><path d="M0 4V.5h4M11 .5h3.500V4M0 10v3.500h4M11 13.500h3.500V10M1 1l4 4M14 1l-4 4M1 13l4-4M14 13l-4-4"/></svg>
    </div>
  </div>
  <div class="taskstrip"><i></i></div>

  <!-- input method popup and site watermark -->
  <div class="ime-pop d-flex align-items-center justify-content-center">EN <svg class="ico" width="9" height="13" viewBox="0 0 9 13"><path d="M3 .5c5 2 6 7 3 10-1.500 1.500-4 1.500-5.500.5C4 10 5 6 3 .5z"/></svg> 简</div>
  <svg class="wm-logo" width="42" height="40" viewBox="0 0 42 40"><path d="M42 0C26 1 10 5 3 16c-4 7-3 13 2 17C2 26 6 19 13 14 21 8 32 3 42 0z" fill="#4f9fdc"/><path d="M34 13C24 12 13 15 10 21c-2 5 2 9 7 9 5 0 10-3 10-6-1-3-6-4-9-2 3 0 5 1 4 3-2 2-6 2-7 0-1-4 8-9 19-12z" fill="#5bb98c"/><path d="M2 39C10 38 22 35 29 28c-3 7-13 11-27 11z" fill="#b8d84a"/></svg>
  <div class="wm-name">极光下载站</div>
  <div class="wm-url">www.xz7.com</div>
  <svg class="wm-dots" width="16" height="6" viewBox="0 0 16 6"><circle cx="2.500" cy="3" r="2" fill="none" stroke="#3b4256"/><circle cx="8" cy="3" r="2" fill="none" stroke="#3b4256"/><circle cx="13.500" cy="3" r="2" fill="none" stroke="#3b4256"/></svg>
</div>

<script>
  // sheet data: first row is the header, A and B are the only filled columns
  const rows = [
    ['产品', '保质期'], ['1', '2022/9/25'], ['2', '2023/6/12'], ['3', '2023/5/27'], ['4', '2023/4/28'],
    ['5', '2023/5/1'], ['6', '2023/5/25'], ['7', '2022/7/9'], ['8', '2023/5/29'], ['9', '2023/5/17'], ['10', '2023/5/19']
  ];
  const cols = 'ABCDEFGHIJKL'.split('');

  let html = '<colgroup><col style="width:32px">' + cols.map(() => '<col style="width:142px">').join('') + '</colgroup>';
  html += '<tr><th class="hc"><svg class="corner-tri" width="10" height="11" viewBox="0 0 10 11"><path d="M10 0v11H0z" fill="#c8ccd4"/></svg></th>';
  cols.forEach((c, i) => { html += `<th class="hc ${i < 2 ? 'col-on' : ''}">${c}</th>`; });
  html += '</tr>';

  for (let r = 0; r < 22; r++) {
    html += `<tr><th class="hr ${r === 0 ? 'row-on' : ''}">${r + 1}</th>`;
    cols.forEach((c, i) => {
      const val = rows[r] && i < 2 ? rows[r][i] : '';
      let cls = r === 0 && i < 2 ? 'cjk' : '';
      if (r === 0 && i === 1) cls += ' filled';
      html += `<td class="${cls}">${val}</td>`;
    });
    html += '</tr>';
  }
  document.getElementById('sheet').innerHTML = html;
</script>
<script src="https://cdn.jsdelivr.net/npm/bootstrap@5.3.3/dist/js/bootstrap.bundle.min.js"></script>
</body>
</html>
